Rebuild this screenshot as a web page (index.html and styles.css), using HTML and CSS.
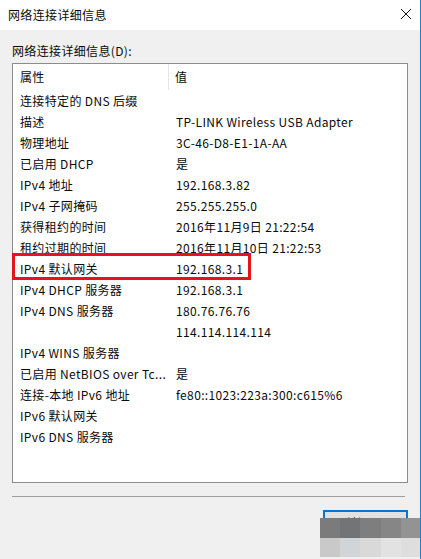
FILE: index.html
```html
<!DOCTYPE html>
<html lang="zh-CN">
<head>
  <meta charset="UTF-8">
  <title>网络连接详细信息</title>
  <link rel="stylesheet" href="styles.css">
</head>
<body>
  <div class="dialog">
    <div class="titlebar">
      <span class="title">网络连接详细信息</span>
      <svg class="close" width="12" height="12" viewBox="0 0 12 12">
        <path d="M1 1 L11 11 M11 1 L1 11" stroke="#111" stroke-width="1"/>
      </svg>
    </div>

    <div class="content">
      <div class="label">网络连接详细信息(D):</div>

      <div class="listbox">
        <div class="header">
          <div class="hcell first">属性</div>
          <div class="hcell">值</div>
        </div>

        <div class="row"><div class="cell">连接特定的 DNS 后缀</div><div class="cell"></div></div>
        <div class="row"><div class="cell">描述</div><div class="cell">TP-LINK Wireless USB Adapter</div></div>
        <div class="row"><div class="cell">物理地址</div><div class="cell">3C-46-D8-E1-1A-AA</div></div>
        <div class="row"><div class="cell">已启用 DHCP</div><div class="cell">是</div></div>
        <div class="row"><div class="cell">IPv4 地址</div><div class="cell">192.168.3.82</div></div>
        <div class="row"><div class="cell">IPv4 子网掩码</div><div class="cell">255.255.255.0</div></div>
        <div class="row"><div class="cell">获得租约的时间</div><div class="cell">2016年11月9日 21:22:54</div></div>
        <div class="row"><div class="cell">租约过期的时间</div><div class="cell">2016年11月10日 21:22:53</div></div>
        <div class="row marked"><div class="cell">IPv4 默认网关</div><div class="cell">192.168.3.1</div></div>
        <div class="row"><div class="cell">IPv4 DHCP 服务器</div><div class="cell">192.168.3.1</div></div>
        <div class="row"><div class="cell">IPv4 DNS 服务器</div><div class="cell">180.76.76.76</div></div>
        <div class="row"><div class="cell"></div><div class="cell">114.114.114.114</div></div>
        <div class="row"><div class="cell">IPv4 WINS 服务器</div><div class="cell"></div></div>
        <div class="row"><div class="cell">已启用 NetBIOS over Tc...</div><div class="cell">是</div></div>
        <div class="row"><div class="cell">连接-本地 IPv6 地址</div><div class="cell">fe80::1023:223a:300:c615%6</div></div>
        <div class="row"><div class="cell">IPv6 默认网关</div><div class="cell"></div></div>
        <div class="row"><div class="cell">IPv6 DNS 服务器</div><div class="cell"></div></div>
      </div>

      <div class="separator"></div>

      <div class="buttons">
        <button type="button" class="btn">关闭(C)</button>
        <div class="mosaic">
          <span style="background:#7b7b7b"></span>
          <span style="background:#727475"></span>
          <span style="background:#7e7e7e"></span>
          <span style="background:#868686"></span>
          <span style="background:#939393"></span>
          <span style="background:#c9c9c9"></span>
          <span style="background:#d1d5d7"></span>
          <span style="background:#d9d9d9"></span>
          <span style="background:#e2e2e2"></span>
          <span style="background:#dedede"></span>
        </div>
      </div>
    </div>
  </div>
</body>
</html>
```

FILE: styles.css
```css
body {
  margin: 0;
  padding: 0;
  font-family: "Noto Sans CJK SC", "Noto Sans", sans-serif;
  font-size: 12px;
  letter-spacing: 0.35px;
  color: #0a0a0a;
  background-color: #f0f0f0;
}
.dialog {
  width: 420px;
  height: 559px;
  border-right: 1px solid #1883d7;
  background-color: #f0f0f0;
  overflow: hidden;
}
.titlebar {
  height: 30px;
  background-color: #fff;
  display: flex;
  align-items: center;
  justify-content: space-between;
  padding: 0 8px 2px 8px;
  box-sizing: border-box;
}
.close {
  margin-right: 0;
}
.content {
  padding: 13px 12px 0 12px;
}
.label {
  height: 20px;
  line-height: 16px;
}
.listbox {
  width: 396px;
  height: 420px;
  box-sizing: border-box;
  border: 1px solid #8c8c8c;
  background-color: #fff;
}
.header {
  height: 26px;
  display: grid;
  grid-template-columns: 156px 1fr;
}
.hcell {
  line-height: 26px;
  padding-left: 6px;
}
.hcell.first {
  padding-left: 7px;
  border-right: 1px solid #e5e5e5;
}
.row {
  height: 21px;
  display: grid;
  grid-template-columns: 163px 1fr;
  line-height: 21px;
  position: relative;
}
.cell {
  white-space: nowrap;
  overflow: hidden;
}
.cell:first-child {
  padding-left: 7px;
}
.row.marked::after {
  content: "";
  position: absolute;
  left: -1px;
  top: -5px;
  width: 239px;
  height: 27px;
  box-sizing: border-box;
  border: 3px solid #e5141b;
}
.separator {
  margin: 13px 3px 0 0;
  border-top: 1px solid #a0a0a0;
}
.buttons {
  position: relative;
  height: 60px;
}
.btn {
  position: absolute;
  left: 311px;
  top: 13px;
  width: 85px;
  height: 24px;
  border: 2px solid #0a74d0;
  background-color: #e1e1e1;
  font-family: inherit;
  font-size: 12px;
  color: #111;
}
.mosaic {
  position: absolute;
  left: 308px;
  top: 21px;
  width: 101px;
  height: 39px;
  display: grid;
  grid-template-columns: repeat(5, 1fr);
  grid-template-rows: 20px 19px;
}
```
